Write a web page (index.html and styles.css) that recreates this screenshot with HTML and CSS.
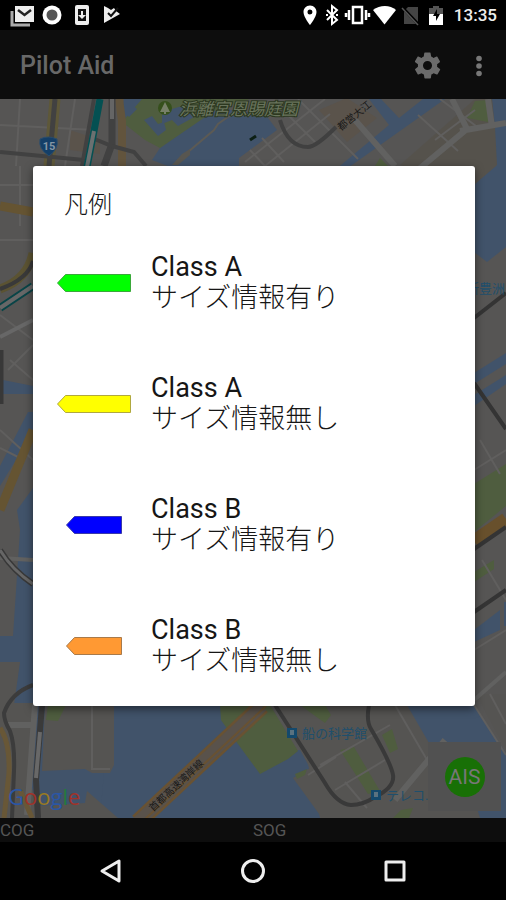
FILE: index.html
```html
<!DOCTYPE html>
<html lang="ja">
<head>
    <meta charset="UTF-8">
    <meta name="viewport" content="width=device-width, initial-scale=1.0">
    <title>Pilot Aid</title>
    <link rel="stylesheet" href="styles.css">
</head>
<body>
    <div class="status-bar">
        <svg class="status-icon" viewBox="0 0 24 24">
            <path d="M2 8v14h18" fill="none" stroke="#aaa" stroke-width="3"/>
            <path d="M5 3h19v16H5z" fill="#eee"/>
            <path d="M8 7l6.500 5L21 7" fill="none" stroke="#222" stroke-width="2.500"/>
        </svg>
        <svg class="status-icon" viewBox="0 0 24 24">
            <circle cx="12" cy="12" r="9.500" fill="#fff"/>
            <circle cx="12" cy="12" r="5.500" fill="#555"/>
        </svg>
        <svg class="status-icon" viewBox="0 0 24 24">
            <rect x="5" y="2" width="14" height="20" rx="2" fill="#eee"/>
            <path d="M8 6h8v12H8z" fill="#111"/>
            <path d="M11 8h2v4h3l-4 4-4-4h3z" fill="#eee"/>
        </svg>
        <svg class="status-icon" viewBox="0 0 24 24">
            <path d="M4 3l4 2 3 2 3-2 2 3 4 3-16 9z" fill="#eee"/>
            <path d="M8 10l3 3 7-8" fill="none" stroke="#111" stroke-width="2"/>
        </svg>
        <span class="spacer"></span>
        <svg class="status-icon" viewBox="0 0 24 24">
            <path d="M13 2.500C9 2.500 6.500 5.500 6.500 9c0 5 6.500 13 6.500 13s6.500-8 6.500-13c0-3.500-2.500-6.500-6.500-6.500zm0 9a2.500 2.500 0 1 1 0-5 2.500 2.500 0 0 1 0 5z" fill="#fff" transform="translate(3 0)"/>
        </svg>
        <svg class="status-icon" viewBox="0 0 24 24">
            <path d="M7 7l10 10-5 4V3l5 4L7 17" fill="none" stroke="#fff" stroke-width="2"/>
            <path d="M6 12h2M16 12h2" stroke="#fff" stroke-width="2"/>
        </svg>
        <svg class="status-icon" viewBox="0 0 24 24">
            <rect x="7" y="4" width="9" height="16" fill="none" stroke="#fff" stroke-width="2.500"/>
            <path d="M3 7v10M20 7v10M0 10v4M23 10v4" stroke="#fff" stroke-width="2.500"/>
        </svg>
        <svg class="status-icon" viewBox="0 0 24 24">
            <path d="M1 7C8 1.500 18 1.500 24 7L12.500 21.500z" fill="#fff"/>
        </svg>
        <svg class="status-icon" viewBox="0 0 24 24">
            <path d="M10 4h10v17H6V8z" fill="#444"/>
            <path d="M4 4l17 18" stroke="#000" stroke-width="3"/>
            <path d="M4 5l16 17" stroke="#555" stroke-width="1.500"/>
        </svg>
        <svg class="status-icon" viewBox="0 0 24 24">
            <path d="M9 3h6v2h4v17H5V5h4z" fill="#555"/>
            <path d="M5 11h14v11H5z" fill="#fff"/>
            <path d="M13 6l-4 7h3v5l4-7h-3z" fill="#000"/>
        </svg>
        <time class="clock">13:35</time>
    </div>

    <header class="app-bar">
        <h1>Pilot Aid</h1>
        <button class="icon-button" aria-label="設定">
            <svg width="31" height="31" viewBox="0 0 24 24" fill="#6b6b6b"><path d="M19.400 13c0-.3.100-.6.100-1s0-.7-.1-1l2.100-1.600c.2-.2.200-.4.100-.6l-2-3.500c-.1-.2-.4-.3-.6-.2l-2.500 1c-.5-.4-1.100-.7-1.700-1l-.4-2.600c0-.3-.2-.5-.4-.5h-4c-.3 0-.5.200-.5.400l-.4 2.700c-.6.200-1.100.600-1.700 1l-2.400-1c-.3-.1-.5 0-.7.200l-2 3.500c-.1.200 0 .500.200.600L4.600 11v2l-2.100 1.700c-.2.200-.2.400-.1.600l2 3.500c.1.200.4.300.6.200l2.500-1c.5.400 1.100.7 1.700 1l.4 2.600c0 .2.200.4.500.4h4c.2 0 .4-.2.500-.4l.4-2.600c.6-.3 1.200-.6 1.700-1l2.400 1c.3.100.5 0 .7-.2l2-3.500c.1-.2 0-.5-.2-.6zM12 15.500a3.500 3.500 0 1 1 0-7 3.500 3.500 0 0 1 0 7z"/></svg>
        </button>
        <button class="icon-button" aria-label="メニュー">
            <svg width="24" height="24" viewBox="0 0 24 24" fill="#777"><circle cx="12" cy="4.500" r="2.800"/><circle cx="12" cy="12" r="2.800"/><circle cx="12" cy="19.500" r="2.800"/></svg>
        </button>
    </header>

    <main class="map">
        <svg class="map-canvas" viewBox="0 99 506 719" preserveAspectRatio="xMidYMid slice">
            <rect y="99" width="506" height="719" fill="#565554"/>

            <!-- 水域 -->
            <g fill="#41536a">
                <path d="M152 160l8-12 55-40 50 6 12 16-38 28v10h-66z"/>
                <path d="M120 122l4-23h18l-8 24z"/>
                <path d="M345 170l100-71h-22l-24 19-18-19h-12l20 26-54 45z"/>
                <path d="M492 99h14v148l-19 15-13-10v-69l22-17z"/>
                <path d="M474 373l32-20v11l-32 20zM474 395l32-20v9l-32 22z"/>
                <path d="M474 630l26-20v20l-26 12zM504 602h2v24h-2z"/>
                <path d="M3 380l30 6v8H3zM0 466l28-54h5v20L0 486z"/>
                <path d="M33 488l-16 22 3 20-7 106H0v182h140l30-113H33z"/>
                <path d="M110 705h120l74 113H100zM406 705h68l32 48v65h-76z"/>
                <path d="M225 750h80l15 68H225z"/>
            </g>

            <!-- 陸地 -->
            <g fill="#555452">
                <path d="M400 165l75-66h17l3 28 2 38-23 20z" fill="#55524c"/>
                <path d="M0 662h20l-6 43h-14z"/>
                <path d="M0 703h34l-6 70 12 45H0z"/>
                <path d="M45 705h69v60l-4 8H92l-7-4-43 2z"/>
                <path d="M38 806l47-3 2-12 31 27H36z"/>
                <path d="M274 705h133l22 38 47 62 4 13H322l-29-40 17-10-11-20z"/>
                <path d="M476 694h30v56z"/>
                <path d="M70 130l30 10v14l-30-4z" fill="#5a534b"/>
                <path d="M319 110l28-12 30 20-30 24z" fill="#5a534b"/>
            </g>

            <!-- 緑地 -->
            <g fill="#4f5d3f">
                <path d="M122 122l20-23h108l-36 12-54 37-15-8z"/>
                <path d="M467 118l8-17 13-1v22z"/>
                <path d="M375 166l5-8 8 8z"/>
                <path d="M474 484l32-20v42l-32 26z"/>
                <path d="M220 705h50l28 46-10 8-28 15-25-34-14-20z"/>
                <path d="M48 705h18l-8 16-12-1zM300 705h25l6 10-6 8z"/>
                <path d="M340 750l14-3 26 44-12 3zM382 735l10-6 6 20-8 4zM393 818l8-8 12-2-4 10z"/>
                <path d="M295 774l12-5-2 6-8 4z"/>
                <path d="M474 572l20-12v9l-20 13z"/>
            </g>
            <g fill="#41536a">
                <path d="M144 120l8-4 6 8 6-2 2 8-8 6zM162 112l20-6 14 10-18 10-6-6-10 4zM124 112l8-7 5 4-8 8z"/>
            </g>
            <path d="M232 114l-14 10-4 6-26 22-12 10" fill="none" stroke="#5c5a54" stroke-width="2"/>
            <path d="M182 154l8-5v6l-12 10h-6z" fill="#585650"/>
            <path d="M250 140l6-4" stroke="#0c1f14" stroke-width="3"/>

            <!-- 細い道路 -->
            <g fill="none" stroke="#605f5e" stroke-width="2">
                <path d="M0 125l95 5M20 99l-4 67M75 99l-10 67M0 185h33M20 166v60M0 240h33"/>
                <path d="M245 162l80-63M265 166l65-52M262 138l22 24M298 99l60 60M285 112l30 30M250 150l15 16"/>
                <path d="M440 99l40 30M418 115l40 36M435 140l40-30"/>
                <path d="M92 705v64l18 0"/>
                <path d="M320 765l70-40M335 790l50-30M345 782l22 26M308 775l28-18M395 705l35 60M474 705l32 50M490 694l16 30"/>
                <path d="M0 315l33 25M8 370l25-25M10 360l23 20M0 430l33 30M474 470l32-20M480 440l20 34M474 650l32-20M0 448l20 10M482 560l24 40"/>
            </g>
            <g fill="none" stroke="#616160" stroke-width="6">
                <path d="M355 120l40 46M452 99l15 30-60 50M460 131l46-8M488 99l4 28"/>
                <path d="M35 705l-8 110M6 725h28M430 805l25-32 20 35M445 740l-50 60"/>
                <path d="M0 558l33 2" stroke-width="4"/>
                <path d="M474 700l32-28" stroke-width="4"/>
            </g>

            <!-- 幹線道路 -->
            <g fill="none">
                <path d="M55 99l-6 67" stroke="#5e5839" stroke-width="11"/>
                <path d="M55 99l-6 67" stroke="#414141" stroke-width="5"/>
                <path d="M0 152l84 8" stroke="#414141" stroke-width="4"/>
                <path d="M119 99l3 22v45" stroke="#62543d" stroke-width="8"/>
                <path d="M112 99v45l-8 22" stroke="#414141" stroke-width="7"/>
                <path d="M112 99v20" stroke="#656565" stroke-width="4"/>
                <path d="M92 138l20 8 22 6 12 14M94 99l-12 67" stroke="#414141" stroke-width="4"/>
                <path d="M100 99l-6 32-7 36" stroke="#045052" stroke-width="7"/>
                <path d="M94 131l-7 36" stroke="#6b7070" stroke-width="4"/>
                <path d="M280 120q8 27 28 27 8 0 28-20" stroke="#404040" stroke-width="4"/>
                <path d="M0 206l33 6M33 430L0 510" stroke="#655432" stroke-width="9"/>
                <path d="M0 289q28-10 33-36" stroke="#5b5332" stroke-width="9"/>
                <path d="M0 289q28-10 33-28" stroke="#393939" stroke-width="4"/>
                <path d="M0 308l33-22" stroke="#084447" stroke-width="8"/>
                <path d="M0 308l33-22M0 337l33-17" stroke="#676767" stroke-width="4"/>
                <path d="M1 350v54" stroke="#383838" stroke-width="5"/>
                <path d="M0 550q12 20 33 34" stroke="#383838" stroke-width="6"/>
                <path d="M0 550q12 20 33 34" stroke="#666" stroke-width="3"/>
                <path d="M0 728q10 14 9 45l-5 45M20 790l12 28" stroke="#685737" stroke-width="5"/>
                <path d="M33 685q-22 8-29 28 0 8 6 18 5 14 4 40l-2 47" stroke="#3c3c3c" stroke-width="4"/>
                <path d="M42 705l-6 75 2 38" stroke="#3a3a3a" stroke-width="6"/>
                <path d="M40 732l-4 46" stroke="#686868" stroke-width="4"/>
                <path d="M138 822l124-116" stroke="#695232" stroke-width="17"/>
                <path d="M138 822l124-116" stroke="#59524b" stroke-width="12"/>
                <path d="M142 822l124-116" stroke="#695232" stroke-width="2"/>
                <path d="M275 705l50 78q12 21 26 22 12 0 24-8 20-10 18-22-2-12-22-46-5-8-2-24" stroke="#393939" stroke-width="4"/>
                <path d="M474 541l32-22" stroke="#68502c" stroke-width="13"/>
                <path d="M474 318l32-25M474 383l32 46M474 549l32-22M474 612l32-22" stroke="#343434" stroke-width="4"/>
            </g>

            <!-- 国道標識 -->
            <path d="M40 139q8-4 17 0 2 10-8 17-11-7-9-17z" fill="#143f68" stroke="#2b4d6c"/>
            <text class="map-shield" x="49" y="150">15</text>

            <!-- 地名 -->
            <circle cx="165" cy="108" r="7" fill="#36501c"/>
            <path d="M165 102l5 10h-4v2h-2v-2h-4z" fill="#778068"/>
            <text class="map-park" x="179" y="115">浜離宮恩賜庭園</text>
            <text class="map-line" transform="translate(341 131) rotate(-39)">都営大江</text>
            <text class="map-line" transform="translate(153 812) rotate(-43)">首都高速湾岸線</text>
            <text class="map-station" x="466" y="293">新豊洲</text>
            <text class="map-station" x="302" y="738">船の科学館</text>
            <text class="map-station" x="386" y="800">テレコ.</text>
            <g fill="#14496c">
                <path d="M287 728h10v10h-10zM371 790h10v10h-10z"/>
                <path d="M290 730h4v5h-4zM374 792h4v5h-4z" fill="#5a7280"/>
            </g>
            <text class="map-logo" x="8" y="805"><tspan fill="#2a56a6">G</tspan><tspan fill="#a0322a">o</tspan><tspan fill="#9a7a22">o</tspan><tspan fill="#2a56a6">g</tspan><tspan fill="#227a3c">l</tspan><tspan fill="#a0322a">e</tspan></text>
        </svg>
        <button class="ais-button"><span>AIS</span></button>
    </main>

    <footer class="info-bar">
        <span>COG</span>
        <span>SOG</span>
    </footer>

    <nav class="nav-bar">
        <button class="icon-button" aria-label="戻る">
            <svg width="28" height="28" viewBox="0 0 28 28" fill="none" stroke="#eee" stroke-width="3" stroke-linejoin="round"><path d="M5 14l17-10v20z"/></svg>
        </button>
        <button class="icon-button" aria-label="ホーム">
            <svg width="28" height="28" viewBox="0 0 28 28" fill="none" stroke="#eee" stroke-width="3"><circle cx="14" cy="14" r="10.500"/></svg>
        </button>
        <button class="icon-button" aria-label="履歴">
            <svg width="28" height="28" viewBox="0 0 28 28" fill="none" stroke="#eee" stroke-width="3" stroke-linejoin="round"><path d="M5 5h18v18H5z"/></svg>
        </button>
    </nav>

    <div class="overlay">
        <section class="dialog" role="dialog" aria-labelledby="legend-title">
            <h2 id="legend-title">凡例</h2>
            <ul class="legend">
                <li>
                    <svg class="ship" viewBox="0 0 74 18"><path d="M.5 9l8-8.500h65v17h-65z" fill="#00ff00" stroke="#3aa83a"/></svg>
                    <p>Class A<br><span>サイズ情報有り</span></p>
                </li>
                <li>
                    <svg class="ship" viewBox="0 0 74 18"><path d="M.5 9l8-8.500h65v17h-65z" fill="#ffff00" stroke="#b0a840"/></svg>
                    <p>Class A<br><span>サイズ情報無し</span></p>
                </li>
                <li>
                    <svg class="ship" viewBox="0 0 74 18"><path d="M9.500 9l8-8.500h47v17h-47z" fill="#0000ff" stroke="#3a3aa8"/></svg>
                    <p>Class B<br><span>サイズ情報有り</span></p>
                </li>
                <li>
                    <svg class="ship" viewBox="0 0 74 18"><path d="M9.500 9l8-8.500h47v17h-47z" fill="#ff9933" stroke="#a87a4a"/></svg>
                    <p>Class B<br><span>サイズ情報無し</span></p>
                </li>
            </ul>
        </section>
    </div>
</body>
</html>
```
FILE: styles.css
```css
* {
    box-sizing: border-box;
}
body {
    margin: 0;
    min-height: 100vh;
    display: flex;
    flex-direction: column;
    position: relative;
    background-color: #000;
    font-family: Roboto, 'Noto Sans CJK JP', sans-serif;
}
button {
    border: none;
    padding: 0;
    background: none;
    font-family: inherit;
    cursor: pointer;
}
h1, h2, p, ul {
    margin: 0;
    padding: 0;
}
.status-bar {
    display: flex;
    align-items: center;
    gap: 2px;
    height: 30px;
    padding: 0 9px 0 10px;
}
.status-icon {
    width: 24px;
    height: 24px;
    overflow: visible;
}
.status-icon:nth-child(-n+4) {
    margin-right: 4px;
}
.spacer {
    flex: 1;
}
.clock {
    margin-left: 4px;
    color: #eee;
    font-size: 17px;
    font-weight: 500;
}
.app-bar {
    display: flex;
    align-items: center;
    gap: 24px;
    height: 69px;
    padding: 2px 15px 0 20px;
    background-color: #0d0d0d;
}
.app-bar h1 {
    flex: 1;
    color: #686868;
    font-size: 25px;
    font-weight: 500;
}
.icon-button {
    display: flex;
}
.map {
    flex: 1;
    display: flex;
    position: relative;
    min-height: 400px;
    overflow: hidden;
}
.map-canvas {
    position: absolute;
    width: 100%;
    height: 100%;
}
.map-shield {
    fill: #8496a5;
    font-size: 11px;
    font-weight: 700;
    text-anchor: middle;
}
.map-park {
    fill: #69745c;
    stroke: #2c3820;
    stroke-width: 2px;
    paint-order: stroke;
    font-size: 17px;
    font-style: italic;
}
.map-line {
    fill: #181818;
    font-size: 10px;
}
.map-station {
    fill: #1f4f6c;
    font-size: 13px;
}
.map-logo {
    font-family: 'Open Sans', sans-serif;
    font-size: 22px;
    font-weight: 500;
}
.ais-button {
    position: absolute;
    right: 5px;
    bottom: 7px;
    display: flex;
    align-items: center;
    justify-content: center;
    width: 73px;
    height: 69px;
    background-color: #515151;
}
.ais-button span {
    width: 40px;
    border-radius: 50%;
    background-color: #187006;
    color: #777;
    font-size: 21px;
    line-height: 40px;
}
.info-bar {
    display: grid;
    grid-template-columns: 1fr 1fr;
    height: 24px;
    background-color: #0d0d0d;
    color: #555;
    font-size: 17px;
    line-height: 24px;
}
.nav-bar {
    display: flex;
    justify-content: center;
    align-items: center;
    gap: 114px;
    height: 58px;
}
.overlay {
    position: absolute;
    inset: 30px 0 58px;
    display: flex;
    align-items: center;
    justify-content: center;
    padding: 0 31px 0 33px;
}
.dialog {
    width: 100%;
    border-radius: 3px;
    background-color: #fff;
    box-shadow: 0 3px 8px rgba(0, 0, 0, 0.5);
    color: #161616;
}
.dialog h2 {
    padding: 22px 31px 0;
    font-size: 24px;
    font-weight: 300;
    line-height: 34px;
}
.legend {
    list-style: none;
}
.legend li {
    display: flex;
    align-items: center;
    gap: 20px;
    height: 121px;
    padding: 0 24px;
}
.legend p {
    font-size: 27px;
    line-height: 31px;
}
.legend span {
    font-weight: 300;
}
.ship {
    width: 74px;
    height: 18px;
}
```
